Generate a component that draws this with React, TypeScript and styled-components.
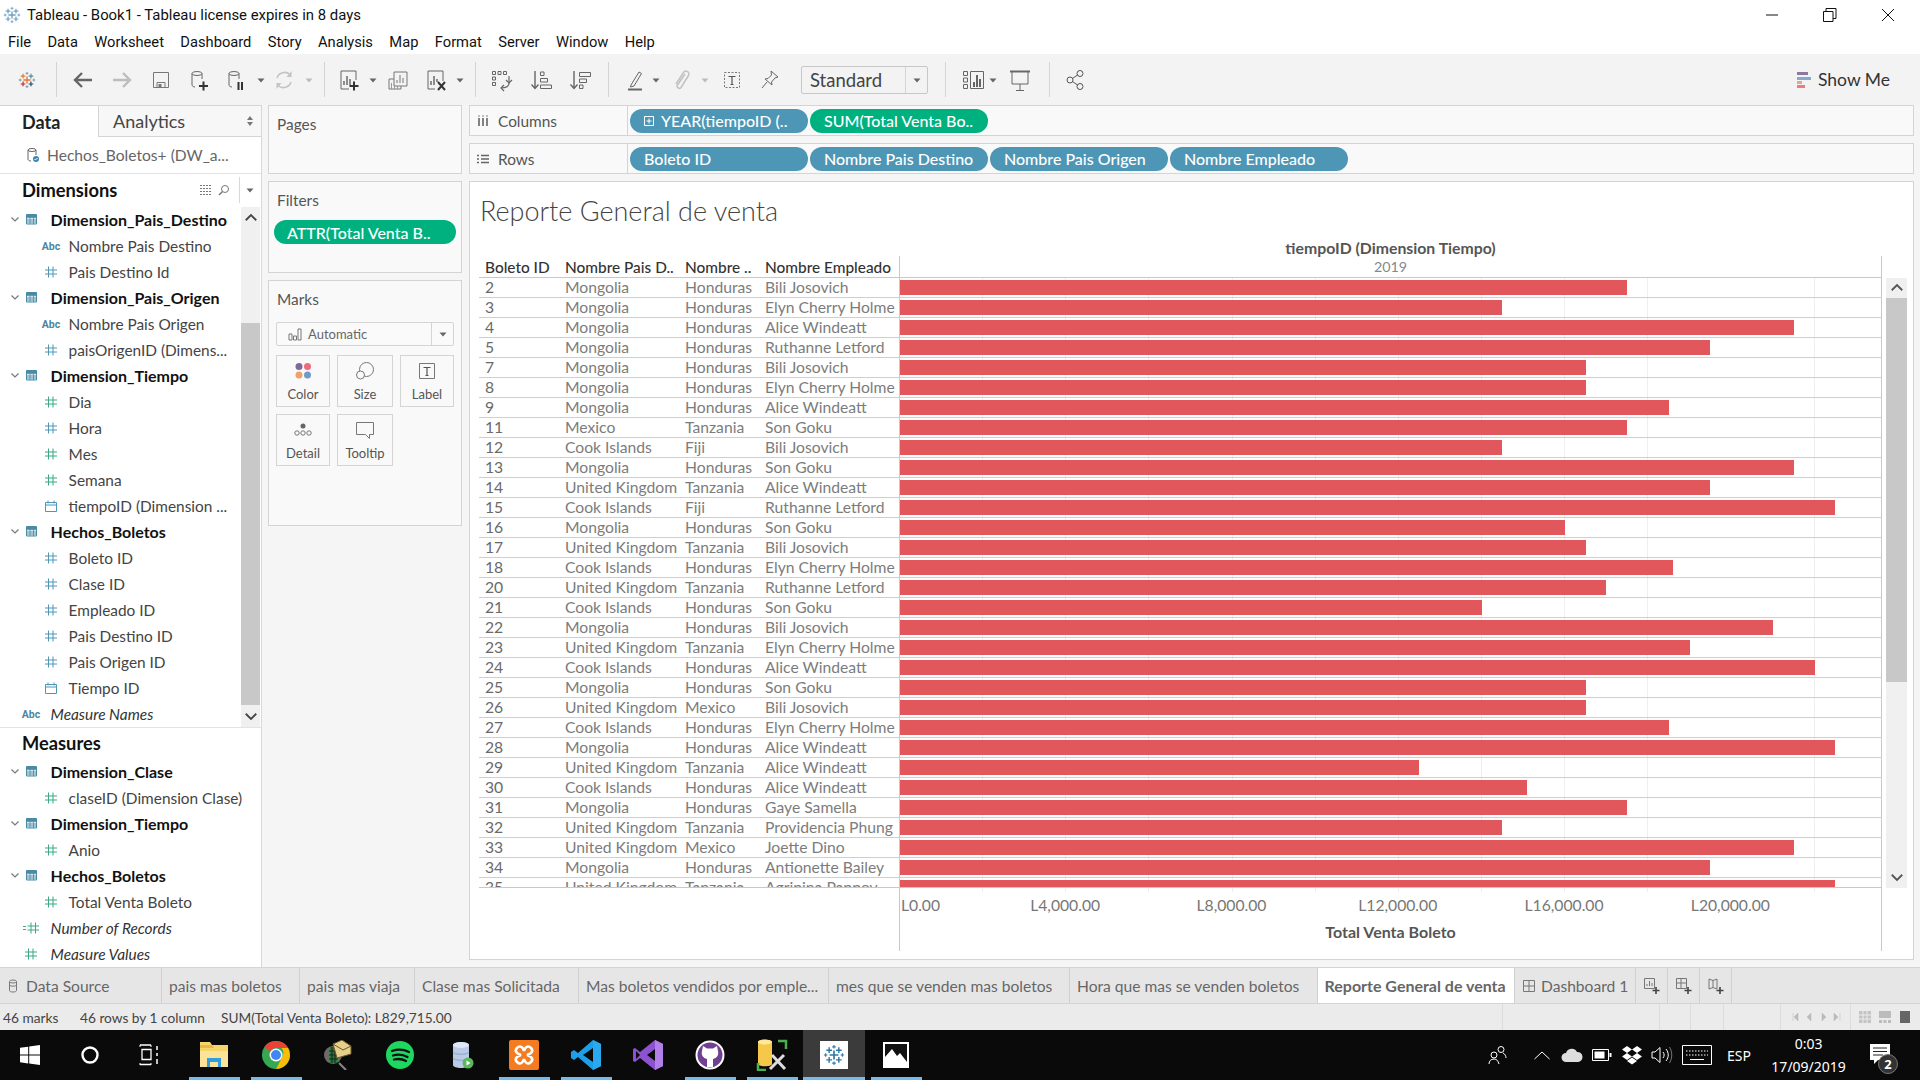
import React from "react";
import styled, { createGlobalStyle } from "styled-components";

const Global = createGlobalStyle`
  html, body { margin: 0; padding: 0; background: #fff; }
  * { box-sizing: border-box; }
`;

const book = `Lato, "Open Sans", sans-serif`;
const ui = `Roboto, "Noto Sans", sans-serif`;

const rows: [number, string, string, string, number][] = [
  [2, "Mongolia", "Honduras", "Bili Josovich", 1627],
  [3, "Mongolia", "Honduras", "Elyn Cherry Holme", 1502],
  [4, "Mongolia", "Honduras", "Alice Windeatt", 1794],
  [5, "Mongolia", "Honduras", "Ruthanne Letford", 1710],
  [7, "Mongolia", "Honduras", "Bili Josovich", 1586],
  [8, "Mongolia", "Honduras", "Elyn Cherry Holme", 1586],
  [9, "Mongolia", "Honduras", "Alice Windeatt", 1669],
  [11, "Mexico", "Tanzania", "Son Goku", 1627],
  [12, "Cook Islands", "Fiji", "Bili Josovich", 1502],
  [13, "Mongolia", "Honduras", "Son Goku", 1794],
  [14, "United Kingdom", "Tanzania", "Alice Windeatt", 1710],
  [15, "Cook Islands", "Fiji", "Ruthanne Letford", 1835],
  [16, "Mongolia", "Honduras", "Son Goku", 1565],
  [17, "United Kingdom", "Tanzania", "Bili Josovich", 1586],
  [18, "Cook Islands", "Honduras", "Elyn Cherry Holme", 1673],
  [20, "United Kingdom", "Tanzania", "Ruthanne Letford", 1606],
  [21, "Cook Islands", "Honduras", "Son Goku", 1482],
  [22, "Mongolia", "Honduras", "Bili Josovich", 1773],
  [23, "United Kingdom", "Tanzania", "Elyn Cherry Holme", 1690],
  [24, "Cook Islands", "Honduras", "Alice Windeatt", 1815],
  [25, "Mongolia", "Honduras", "Son Goku", 1586],
  [26, "United Kingdom", "Mexico", "Bili Josovich", 1586],
  [27, "Cook Islands", "Honduras", "Elyn Cherry Holme", 1669],
  [28, "Mongolia", "Honduras", "Alice Windeatt", 1835],
  [29, "United Kingdom", "Tanzania", "Alice Windeatt", 1419],
  [30, "Cook Islands", "Honduras", "Alice Windeatt", 1527],
  [31, "Mongolia", "Honduras", "Gaye Samella", 1627],
  [32, "United Kingdom", "Tanzania", "Providencia Phung", 1502],
  [33, "United Kingdom", "Mexico", "Joette Dino", 1794],
  [34, "Mongolia", "Honduras", "Antionette Bailey", 1710],
  [35, "United Kingdom", "Tanzania", "Agripina Pappov", 1835],
];

const BLUE = "#4e96b5";
const GREEN = "#3aa883";

/* ---------- icons ---------- */
const Ico = ({ s = 24, h, box, children }: { s?: number; h?: number; box?: string; children: React.ReactNode }) => (
  <svg width={s} height={h ?? s} viewBox={box ?? `0 0 ${s} ${h ?? s}`} fill="none">
    {children}
  </svg>
);

const cross = (x: number, y: number, r: number) => `M${x - r} ${y}H${x + r}M${x} ${y - r}V${y + r}`;

const TableauMark = ({ s = 20, mono }: { s?: number; mono?: string }) => (
  <Ico s={s} box="0 0 20 20">
    <path d={cross(10, 10, 4)} stroke={mono ?? "#e8762d"} strokeWidth="1.5" />
    <path d={cross(5.6, 5.6, 2.6)} stroke={mono ?? "#e8762d"} strokeWidth="1.3" />
    <path d={cross(14.4, 5.6, 2.6)} stroke={mono ?? "#5b879b"} strokeWidth="1.3" />
    <path d={cross(5.6, 14.4, 2.6)} stroke={mono ?? "#c72037"} strokeWidth="1.3" />
    <path d={cross(14.4, 14.4, 2.6)} stroke={mono ?? "#1f447e"} strokeWidth="1.3" />
    <path d={cross(10, 2.6, 1.6)} stroke={mono ?? "#7099a6"} strokeWidth="1" />
    <path d={cross(10, 17.4, 1.6)} stroke={mono ?? "#7099a6"} strokeWidth="1" />
    <path d={cross(2.4, 10, 1.6)} stroke={mono ?? "#7099a6"} strokeWidth="1" />
    <path d={cross(17.6, 10, 1.6)} stroke={mono ?? "#7099a6"} strokeWidth="1" />
  </Ico>
);

const Arrow = ({ flip, c }: { flip?: boolean; c: string }) => (
  <Ico s={24}>
    <path d={flip ? "M3 12h17M13 5l7 7-7 7" : "M21 12H4M11 5l-7 7 7 7"} stroke={c} strokeWidth="2.4" />
  </Ico>
);

const Save = () => (
  <Ico s={24}>
    <path d="M4.5 4.5h15v15h-15z" stroke="#777" />
    <path d="M8 19.5v-5h8v5" stroke="#777" />
    <path d="M9.5 16h3v3.5h-3z" fill="#777" />
  </Ico>
);

const Cyl = ({ c = "#666" }: { c?: string }) => (
  <>
    <ellipse cx="9" cy="5.5" rx="5" ry="2" stroke={c} />
    <path d="M4 5.5V17c0 1 1.5 2 3 2M14 5.5V11" stroke={c} />
  </>
);

const NewDS = () => (
  <Ico s={24}>
    <Cyl />
    <path d="M11 18h9M15.5 13.5v9" stroke="#333" strokeWidth="2" />
  </Ico>
);

const PauseDS = () => (
  <Ico s={24}>
    <Cyl />
    <path d="M13.5 14v8M17 14v8" stroke="#333" strokeWidth="2" />
  </Ico>
);

const Refresh = () => (
  <Ico s={24}>
    <path d="M5 10a8 8 0 0 1 13-3.5M19 14a8 8 0 0 1-13 3.5" stroke="#c4c4c4" strokeWidth="1.6" />
    <path d="M19.5 3v6h-5zM4.5 21v-6h5z" fill="#c4c4c4" />
  </Ico>
);

const Caret = ({ c = "#666" }: { c?: string }) => (
  <Ico s={10}>
    <path d="M1.5 3.5h7L5 7.5z" fill={c} />
  </Ico>
);

const NewSheet = () => (
  <Ico s={24}>
    <path d="M12 21H4V3h15v9" stroke="#666" />
    <path d="M7 17v-4M10 17V8M13 17v-6" stroke="#555" strokeWidth="1.3" />
    <path d="M12.5 18h9M17 13.5v9" stroke="#333" strokeWidth="2" />
  </Ico>
);

const Dup = () => (
  <Ico s={24}>
    <path d="M8 4h13v14H8z" stroke="#777" />
    <path d="M11 15v-3M14 15V7M17 15v-5" stroke="#777" />
    <path d="M3 11h5M3 11v10h12v-3" stroke="#777" />
    <path d="M5.5 21v-6M8.5 21v-3M11.5 21v-3" stroke="#999" />
  </Ico>
);

const Clear = () => (
  <Ico s={24}>
    <path d="M11 21H4V3h15v10" stroke="#666" />
    <path d="M7 17v-4M10 17V8M13 14v-3" stroke="#555" strokeWidth="1.3" />
    <path d="M14 14l7 8M21 14l-7 8" stroke="#333" strokeWidth="2" />
  </Ico>
);

const Swap = () => (
  <Ico s={24}>
    <path d="M3.5 3.5h3v3h-3zM9 3.5h3v3H9zM14.5 3.5h3v3h-3zM3.5 9h3v3h-3zM3.5 14.5h3v3h-3z" stroke="#666" />
    <path d="M20 8v7c0 3-3 5-8 5" stroke="#666" strokeWidth="1.2" />
    <path d="M17 12l3 3 3-3M15 17l-3 3 3 3" stroke="#666" strokeWidth="1.2" />
  </Ico>
);

const Sort = ({ desc }: { desc?: boolean }) => (
  <Ico s={24}>
    <path d="M6 3v17M2.5 16.5L6 20.5l3.5-4" stroke="#666" strokeWidth="1.4" />
    {desc ? (
      <path d="M11.5 4.5h11v4h-11zM11.5 11h7v3.5h-7zM11.5 17h3.5v3.5h-3.5z" stroke="#666" />
    ) : (
      <path d="M11.5 4h3.5v3.5h-3.5zM11.5 10.5h7V14h-7zM11.5 17h11v3.5h-11z" stroke="#666" />
    )}
  </Ico>
);

const Highlight = () => (
  <Ico s={24}>
    <path d="M8 17L16 4l2.5 1.5L11 18l-3.5 1z" stroke="#666" />
    <path d="M5 21.5h14" stroke="#666" strokeWidth="2" />
  </Ico>
);

const Clip = () => (
  <Ico s={24}>
    <path d="M16 6l-7.5 11c-1.5 2.5 2 4.5 3.5 2.5L19.5 7.5c2-3.5-3-6-5-3L7 16" stroke="#c2c2c2" strokeWidth="1.5" />
  </Ico>
);

const LabelT = ({ dashed }: { dashed?: boolean }) => (
  <Ico s={24}>
    <path d="M4.5 4.5h15v15h-15z" stroke="#777" strokeDasharray={dashed ? "2 1.5" : undefined} />
    <path d="M8.5 8.5h7M12 8.5v8M10.5 16.5h3" stroke="#555" strokeWidth="1.2" />
  </Ico>
);

const Pin = () => (
  <Ico s={24}>
    <path d="M13 3l7 6-3 1-3.5 4 .5 3-7-6 3-.5L13.5 7z" stroke="#666" />
    <path d="M9 14l-5 6" stroke="#666" />
  </Ico>
);

const FitIcon = () => (
  <Ico s={24}>
    <path d="M3.5 3.5h4v4h-4zM3.5 10h4v4h-4zM3.5 16.5h4v4h-4zM10.5 3.5h13v17h-13z" stroke="#666" />
    <path d="M14 19v-5M17 19V7M20 19v-8" stroke="#555" strokeWidth="1.8" />
  </Ico>
);

const Present = () => (
  <Ico s={24}>
    <path d="M2 3.5h20" stroke="#666" strokeWidth="2" />
    <path d="M4 4v12h16V4M12 16v6M8 22.5h8" stroke="#666" />
  </Ico>
);

const Share = () => (
  <Ico s={24}>
    <circle cx="6" cy="12" r="3" stroke="#555" />
    <circle cx="16" cy="5.5" r="3" stroke="#555" />
    <circle cx="16" cy="18.5" r="3" stroke="#555" />
    <path d="M8.5 10.5l5-3.5M8.5 13.5l5 3.5" stroke="#555" />
  </Ico>
);

const ShowMeBars = () => (
  <Ico s={14} h={16}>
    <path d="M0 0h11v3H0z" fill="#8a7a9c" />
    <path d="M0 5h14v3H0z" fill="#86a9cf" />
    <path d="M0 9h5v3H0z" fill="#eba57f" />
    <path d="M0 13h8v3H0z" fill="#ef7a85" />
  </Ico>
);

const TableGlyph = () => (
  <Ico s={12} h={11}>
    <path d="M.5.5h10v9.5H.5z" fill="#dbe9ef" stroke="#4a8aa6" />
    <path d="M.5 3.5h10M.5 6h10M.5 8h10M4 3.5V10M7.5 3.5V10" stroke="#4a8aa6" strokeWidth=".8" />
    <path d="M.5.5h10V3H.5z" fill="#4a8aa6" />
  </Ico>
);

const Hash = ({ c }: { c: string }) => (
  <Ico s={12}>
    <path d="M3.5.5v11M8 .5v11M0 4h12M0 8h12" stroke={c} />
  </Ico>
);

const DoubleHash = () => (
  <Ico s={16} h={12}>
    <path d="M8 .5v11M12.5 .5v11M4.5 4H16M4.5 8H16M0 4.5h3M0 7.5h3" stroke={GREEN} />
  </Ico>
);

const Cal = () => (
  <Ico s={12}>
    <path d="M.5 2.5h11v9H.5zM.5 5h11M3 .5v3M9 .5v3" stroke={BLUE} />
  </Ico>
);

const Chevron = ({ dir = "down", c = "#777", s = 8 }: { dir?: "down" | "up"; c?: string; s?: number }) => (
  <Ico s={s} box="0 0 8 8">
    <path d={dir === "down" ? "M.5 2.5L4 6l3.5-3.5" : "M.5 5.5L4 2l3.5 3.5"} stroke={c} strokeWidth="1.2" />
  </Ico>
);

const DataSourceIcon = () => (
  <Ico s={16}>
    <ellipse cx="6" cy="3" rx="4" ry="1.5" stroke="#666" />
    <path d="M2 3v9c0 1 1 2 3 2M10 3v5" stroke="#666" />
    <circle cx="10" cy="12" r="3" fill="#3d87b4" />
    <path d="M8.5 12l1 1 2-2" stroke="#fff" />
  </Ico>
);

const Mini = ({ kind }: { kind: "sheet" | "dash" | "story" }) => (
  <Ico s={18}>
    {kind === "sheet" && <path d="M1.5 1.5h10v10h-10zM4 9V7M6.5 9V4M9 9V6" stroke="#777" />}
    {kind === "dash" && <path d="M1.5 1.5h10v10h-10zM1.5 6h10M6 1.5v10" stroke="#777" />}
    {kind === "story" && <path d="M2 2l4 1.5L10 2v10l-4-1.5L2 12zM6 3.5v7" stroke="#777" />}
    <path d="M9.5 13.5h7M13 10v7" stroke="#444" strokeWidth="1.6" />
  </Ico>
);

/* ---------- taskbar icons ---------- */
const WinLogo = () => (
  <Ico s={20}>
    <path d="M0 2.8L8.2 1.7v7.9H0zM9.2 1.5L20 0v9.6H9.2zM0 10.5h8.2v7.9L0 17.2zM9.2 10.5H20V20L9.2 18.5z" fill="#fff" />
  </Ico>
);
const Cortana = () => (
  <Ico s={20}>
    <circle cx="10" cy="10" r="7.5" stroke="#fff" strokeWidth="2.4" />
  </Ico>
);
const TaskView = () => (
  <Ico s={22}>
    <path d="M1 1h11M1 20.5h11M3 5.5h9v10H3z" stroke="#fff" strokeWidth="1.3" />
    <path d="M18 2v4M18 9v3M18 15v5" stroke="#fff" strokeWidth="1.5" />
    <path d="M1 1v2M12 1v2M1 19v2M12 19v2" stroke="#fff" />
  </Ico>
);
const Explorer = () => (
  <Ico s={28}>
    <path d="M0 1h10l2 3h16v22H0z" fill="#f6d56b" />
    <path d="M0 4h12l2 3H0z" fill="#e8b93f" />
    <path d="M0 10h28v16H0z" fill="#fbe49a" />
    <path d="M7 17h14v9h-3v-5h-8v5H7z" fill="#2f9fe0" />
  </Ico>
);
const Chrome = () => (
  <Ico s={28}>
    <circle cx="14" cy="14" r="14" fill="#34a853" />
    <path d="M14 0a14 14 0 0 1 12.1 7H14a7 7 0 0 0-6.1 3.5L2.3 6A14 14 0 0 1 14 0z" fill="#ea4335" />
    <path d="M26.1 7A14 14 0 0 1 14 28l5.5-10.5L21 14a7 7 0 0 0-1.5-7z" fill="#fbbc05" />
    <circle cx="14" cy="14" r="6.5" fill="#fff" />
    <circle cx="14" cy="14" r="5" fill="#4285f4" />
  </Ico>
);
const MailSearch = () => (
  <Ico s={30}>
    <circle cx="10" cy="15" r="9" fill="#6b6b6b" />
    <path d="M7 7h7v16H7z" fill="#1a7d30" />
    <path d="M9 7v16M12 7v16M6 11h9M6 15h9M6 19h9" stroke="#222" />
    <path d="M10 4l9-4 9 6v8l-14 4z" fill="#e7cf8c" stroke="#6b5a25" />
    <path d="M10 4l10 6 8-4" stroke="#6b5a25" />
    <path d="M16 23l7 7" stroke="#888" strokeWidth="2" />
  </Ico>
);
const Spotify = () => (
  <Ico s={28}>
    <circle cx="14" cy="14" r="14" fill="#1ed760" />
    <path d="M6 10c6-2 12-1.5 17 1M7 14.5c5-1.5 10-1 14.5 1.5M8 18.5c4.5-1 8.5-.5 12 1.5" stroke="#111" strokeWidth="2.3" strokeLinecap="round" />
  </Ico>
);
const DSIcon = () => (
  <Ico s={28}>
    <path d="M5 4c0-4 16-4 16 0v20c0 4-16 4-16 0z" fill="#b9cbe6" />
    <ellipse cx="13" cy="4" rx="8" ry="3" fill="#dfe8f5" />
    <path d="M5 11c0 3 16 3 16 0M5 17c0 3 16 3 16 0" stroke="#8ea4c6" />
    <circle cx="20" cy="22" r="5.5" fill="#5cb85c" />
    <path d="M18.5 19.5l4 2.5-4 2.5z" fill="#fff" />
  </Ico>
);
const Xampp = () => (
  <Ico s={30}>
    <path d="M2 0h26a2 2 0 0 1 2 2v26a2 2 0 0 1-2 2H2a2 2 0 0 1-2-2V2a2 2 0 0 1 2-2z" fill="#f47b20" />
    <path d="M8 8c3-3 6-1 7 3 1-4 4-6 7-3s0 6-4 7c4 1 7 4 4 7s-6 1-7-3c-1 4-4 6-7 3s0-6 4-7c-4-1-7-4-4-7z" stroke="#fff" strokeWidth="2.6" />
  </Ico>
);
const VSCode = () => (
  <Ico s={30}>
    <path d="M22 0l8 4v22l-8 4L7 17l-4 3-3-2v-6l3-2 4 3z" fill="#1c9fe8" />
    <path d="M22 8L12 15l10 7z" fill="#0a0a0a" />
    <path d="M22 0l8 4v22l-8 4z" fill="#2aa9ee" />
  </Ico>
);
const VS = () => (
  <Ico s={30}>
    <path d="M22 0l8 4v22l-8 4L7 18l-5 4-2-1V9l2-1 5 4z" fill="#8d52d1" />
    <path d="M22 9l-8 6 8 6zM3 11v8l4-4z" fill="#0a0a0a" />
    <path d="M22 0l8 4v22l-8 4z" fill="#b27fe8" />
  </Ico>
);
const GitHub = () => (
  <Ico s={30}>
    <circle cx="15" cy="15" r="14.5" fill="#fff" />
    <circle cx="15" cy="15" r="12.5" fill="#6f3f91" />
    <path d="M8 6l4 2.5h6L22 6l1 5c1 4-1 7-5 8v8h-6v-8c-4-1-6-4-5-8z" fill="#fff" />
  </Ico>
);
const ToolIcon = () => (
  <Ico s={32}>
    <path d="M2 3c0-3 14-3 14 0v22c0 3-14 3-14 0z" fill="#f5c84a" />
    <ellipse cx="9" cy="3" rx="7" ry="2.5" fill="#ffe89a" />
    <path d="M22 2h8v8M2 24v7h8" stroke="#4caf50" strokeWidth="2.5" />
    <path d="M14 30l14-14M16 16l13 14" stroke="#ddd" strokeWidth="3" />
  </Ico>
);
const TableauTile = () => (
  <SmallTile>
    <TableauMark s={22} mono="#2f78a8" />
  </SmallTile>
);
const Photos = () => (
  <Ico s={26}>
    <path d="M0 0h26v26H0z" fill="#fff" />
    <path d="M2 2h22v22H2z" fill="#111" />
    <path d="M2 24V15l7-8 5 7 3-3 7 9v4z" fill="#fff" />
  </Ico>
);
const People = () => (
  <Ico s={20}>
    <circle cx="6" cy="10" r="3" stroke="#fff" />
    <circle cx="13" cy="4.5" r="3" stroke="#fff" />
    <path d="M1 19c0-3 2-5 5-5s4 2 5 5M15 8c2 1 3 3 3 5" stroke="#fff" />
  </Ico>
);
const Cloud = () => (
  <Ico s={22} h={16}>
    <path d="M5 15a4.5 4.5 0 0 1 0-9 6 6 0 0 1 11-1 5 5 0 0 1 1 10z" fill="#ddd" />
  </Ico>
);
const Battery = () => (
  <Ico s={20} h={12}>
    <path d="M.5.5h16v11H.5z" stroke="#fff" />
    <path d="M2.5 2.5h10v7h-10z" fill="#fff" />
    <path d="M17.5 4h2v4h-2z" fill="#fff" />
  </Ico>
);
const Dropbox = () => (
  <Ico s={20}>
    <path d="M5 1l5 3.5L5 8 0 4.5zM15 1l5 3.5L15 8l-5-3.5zM5 8l5 3.5L5 15l-5-3.5zM15 8l5 3.5L15 15l-5-3.5zM10 12.5l5 3.5-5 3.5L5 16z" fill="#fff" />
  </Ico>
);
const Volume = () => (
  <Ico s={22} h={18}>
    <path d="M1 6h3l5-4.5v15L4 12H1z" stroke="#fff" />
    <path d="M12 6c1.5 2 1.5 4 0 6M15 3c3 4 3 8 0 12" stroke="#fff" />
    <path d="M18.5 1c3 5 3 11 0 16" stroke="#777" />
  </Ico>
);
const Keyboard = () => (
  <Ico s={30} h={20}>
    <path d="M.5.5h29v19H.5z" stroke="#fff" />
    <path d="M4 6h22M4 10h22" stroke="#fff" strokeDasharray="1.5 1.5" />
    <path d="M8 14.5h14" stroke="#fff" />
  </Ico>
);
const NotifIcon = () => (
  <Ico s={20} h={22}>
    <path d="M0 0h20v16H8l-4 4v-4H0z" fill="#fff" />
    <path d="M3 4h14M3 7.5h14M3 11h10" stroke="#222" strokeWidth="1.2" />
  </Ico>
);

/* ---------- layout ---------- */
const Page = styled.div`
  width: 1920px;
  height: 1080px;
  display: flex;
  flex-direction: column;
  overflow: hidden;
  font-family: ${book};
  color: #333;
`;

const TitleBar = styled.div`
  height: 29px;
  display: flex;
  align-items: center;
  padding-left: 3px;
  font: 14.9px ${ui};
  color: #111;
  gap: 6px;
`;

const WindowBtns = styled.div`
  margin-left: auto;
  display: flex;
  padding-right: 3px;
`;

const WindowBtn = styled.div`
  width: 58px;
  height: 29px;
  display: flex;
  align-items: center;
  justify-content: center;
`;

const MenuBar = styled.div`
  height: 25px;
  display: flex;
  align-items: center;
  gap: 16.4px;
  padding-left: 8px;
  font: 14.7px ${ui};
  color: #111;
`;

const Toolbar = styled.div`
  height: 51px;
  display: flex;
  align-items: center;
  background: #f3f3f3;
`;

const Tool = styled.div<{ $ml: number; $w?: number }>`
  flex: none;
  width: ${(p) => p.$w ?? 28}px;
  margin-left: ${(p) => p.$ml}px;
  display: flex;
  align-items: center;
  justify-content: center;
`;

const ToolSep = styled.div<{ $ml: number }>`
  flex: none;
  width: 1px;
  height: 35px;
  margin-left: ${(p) => p.$ml}px;
  background: #d4d4d4;
`;

const StandardSelect = styled.div`
  flex: none;
  width: 127px;
  height: 28px;
  margin-left: 17px;
  border: 1px solid #c8c8c8;
  border-radius: 2px;
  display: flex;
  align-items: center;
  font-size: 18.5px;
  color: #444;
  padding-left: 8px;
`;

const SelectArrow = styled.span`
  margin-left: auto;
  width: 22px;
  height: 100%;
  border-left: 1px solid #d4d4d4;
  display: flex;
  align-items: center;
  justify-content: center;
`;

const ShowMe = styled.div`
  margin-left: auto;
  padding-right: 30px;
  display: flex;
  align-items: center;
  gap: 7px;
  font-size: 17.5px;
  color: #333;
`;

const Workspace = styled.div`
  height: 862px;
  display: flex;
  background: #f5f5f5;
`;

const Sidebar = styled.aside`
  flex: none;
  width: 262px;
  background: #fff;
  border-right: 1px solid #d8d8d8;
  border-top: 1px solid #d4d4d4;
  display: flex;
  flex-direction: column;
`;

const SideTabs = styled.div`
  height: 31px;
  display: flex;
  flex: none;
`;

const DataTab = styled.div`
  width: 98px;
  padding-left: 22px;
  font-size: 18px;
  font-weight: 700;
  color: #222;
  display: flex;
  align-items: center;
`;

const AnalyticsTab = styled.div`
  flex: 1;
  display: flex;
  align-items: center;
  padding: 0 7px 0 14px;
  font-size: 18px;
  color: #444;
  background: #f7f7f7;
  border-left: 1px solid #d4d4d4;
  border-bottom: 1px solid #d4d4d4;
  justify-content: space-between;
`;

const SourceRow = styled.div`
  height: 37px;
  flex: none;
  display: flex;
  align-items: center;
  gap: 5px;
  padding-left: 26px;
  font-size: 15.6px;
  color: #666;
  border-bottom: 1px solid #e3e3e3;
`;

const SideHeader = styled.div<{ $h: number }>`
  height: ${(p) => p.$h}px;
  flex: none;
  display: flex;
  align-items: center;
  padding: 0 0 2px 22px;
  font-size: 18.3px;
  font-weight: 700;
  color: #111;
`;

const HeaderTools = styled.div`
  margin-left: auto;
  display: flex;
  align-items: center;
  gap: 5.5px;
  padding-right: 6px;
`;

const HeaderSep = styled.div`
  width: 1px;
  height: 26px;
  margin-left: 3px;
  background: #d8d8d8;
`;

const DimArea = styled.div`
  height: 521px;
  flex: none;
  display: flex;
  border-bottom: 1px solid #e3e3e3;
`;

const TreeList = styled.div`
  flex: 1;
  min-width: 0;
`;

const SideScroll = styled.div`
  flex: none;
  width: 19px;
  margin-right: 1px;
  display: flex;
  flex-direction: column;
  background: #f0f0f0;
`;

const ScrollEnd = styled.div<{ $h: number }>`
  height: ${(p) => p.$h}px;
  flex: none;
  display: flex;
  align-items: center;
  justify-content: center;
`;

const ScrollThumb = styled.div<{ $h: number }>`
  height: ${(p) => p.$h}px;
  flex: none;
  background: #c8c8c8;
`;

const ScrollFill = styled.div`
  flex: 1;
`;

const TreeRow = styled.div`
  height: 26px;
  display: flex;
  align-items: center;
  white-space: nowrap;
  font-size: 15.4px;
`;

const SectionRow = styled(TreeRow)`
  padding: 0 0 2px 10px;
  font-size: 16px;
  font-weight: 700;
  color: #111;
`;

const FieldRow = styled(TreeRow)`
  padding-left: 42px;
  color: #444;
`;

const SpecialRow = styled(TreeRow)`
  padding-left: 22px;
  color: #333;
  font-style: italic;
`;

const IconSlot = styled.span<{ $w: number; $ml?: number; $mr?: number }>`
  flex: none;
  width: ${(p) => p.$w}px;
  margin-left: ${(p) => p.$ml ?? 0}px;
  margin-right: ${(p) => p.$mr ?? 0}px;
  display: flex;
  align-items: center;
  justify-content: center;
`;

const AbcTag = styled.span`
  font: 700 10.5px Roboto, sans-serif;
  font-style: normal;
  color: #4a87a3;
`;

const CardsCol = styled.div`
  flex: none;
  width: 194px;
  margin-left: 6px;
  display: flex;
  flex-direction: column;
  gap: 7px;
`;

const Card = styled.section<{ $h: number }>`
  height: ${(p) => p.$h}px;
  flex: none;
  background: #f9f9f9;
  border: 1px solid #d4d4d4;
  padding: 0 7px;
`;

const CardTitle = styled.div`
  height: 35px;
  display: flex;
  align-items: center;
  padding-left: 1px;
  font-size: 15.4px;
  color: #555;
`;

const FilterPill = styled.div`
  height: 24px;
  border-radius: 12px;
  background: #00b180;
  color: #fff;
  margin: 3px -2px 0 -2px;
  padding-left: 13px;
  display: flex;
  align-items: center;
  font-size: 16px;
  font-weight: 500;
`;

const MarkType = styled.div`
  height: 24px;
  margin: 6px 0 9px 0;
  width: 178px;
  background: #fafafa;
  border: 1px solid #d4d4d4;
  border-radius: 2px;
  display: flex;
  align-items: center;
  padding-left: 11px;
  gap: 6px;
  font-size: 13px;
  color: #666;
`;

const MarkGrid = styled.div`
  display: grid;
  grid-template-columns: 54px 56px 54px;
  grid-auto-rows: 52px;
  gap: 7px;
`;

const MarkBtn = styled.div`
  border: 1px solid #d4d4d4;
  display: flex;
  flex-direction: column;
  align-items: center;
  font-size: 13px;
  color: #555;
  padding-top: 3px;
  gap: 3px;
`;

const MarkIcon = styled.div`
  height: 24px;
  display: flex;
  align-items: center;
`;

const MainCol = styled.div`
  flex: 1;
  min-width: 0;
  margin-left: 7px;
  margin-right: 6px;
  display: flex;
  flex-direction: column;
  gap: 7px;
`;

const Shelf = styled.div`
  height: 31px;
  flex: none;
  display: flex;
  align-items: center;
  background: #f9f9f9;
  border: 1px solid #d4d4d4;
`;

const ShelfLabel = styled.div`
  width: 158px;
  height: 100%;
  flex: none;
  display: flex;
  align-items: center;
  gap: 9px;
  padding-left: 7px;
  font-size: 15.4px;
  color: #555;
  border-right: 1px solid #d4d4d4;
  margin-right: 2px;
`;

const Pill = styled.div<{ $green?: boolean }>`
  width: 178px;
  height: 24px;
  flex: none;
  margin-right: 2px;
  border-radius: 12px;
  background: ${(p) => (p.$green ? "#00b180" : "#4e96b5")};
  color: #fff;
  display: flex;
  align-items: center;
  gap: 7px;
  padding-left: 14px;
  font-size: 16px;
  font-weight: 500;
  white-space: nowrap;
`;

const Viz = styled.section`
  height: 779px;
  flex: none;
  background: #fff;
  border: 1px solid #d4d4d4;
  padding-left: 9px;
  display: flex;
  flex-direction: column;
`;

const VizTitle = styled.h1`
  margin: 0;
  height: 57px;
  padding-left: 1px;
  display: flex;
  align-items: center;
  font-size: 27px;
  font-weight: 300;
  color: #444;
  flex: none;
`;

const ChartCaption = styled.div`
  height: 17px;
  margin-left: 420px;
  width: 983px;
  text-align: center;
  font-size: 15.8px;
  font-weight: 700;
  color: #555;
  line-height: 17px;
  flex: none;
`;

const HeadRow = styled.div`
  height: 22px;
  width: 1403px;
  display: flex;
  flex: none;
  border-bottom: 1px solid #c8c8c8;
  padding-left: 6px;
  font-size: 15.4px;
  font-weight: 500;
  color: #333;
  align-items: center;
`;

const YearCell = styled.div`
  width: 983px;
  height: 100%;
  border-left: 1px solid #c8c8c8;
  border-right: 1px solid #c8c8c8;
  display: flex;
  align-items: center;
  justify-content: center;
  font-size: 14.3px;
  font-weight: 400;
  color: #888;
`;

const Cell = styled.div<{ $w: number; $c?: string }>`
  flex: none;
  width: ${(p) => p.$w}px;
  color: ${(p) => p.$c ?? "inherit"};
  white-space: nowrap;
`;

const BodyCell = styled(Cell)`
  margin-bottom: 2px;
`;

const TableBody = styled.div`
  height: 610px;
  display: flex;
  flex: none;
`;

const RowsClip = styled.div`
  width: 1403px;
  height: 610px;
  overflow: hidden;
  border-bottom: 1px solid #c8c8c8;
  flex: none;
`;

const DataRow = styled.div`
  height: 20px;
  display: flex;
  align-items: center;
  border-bottom: 1px solid #cfcfcf;
  padding-left: 6px;
  font-size: 15.7px;
  color: #7c7c7c;
`;

const BarCell = styled.div`
  width: 983px;
  height: 19px;
  flex: none;
  padding-top: 2px;
  border-right: 1px solid #c8c8c8;
  border-left: 1px solid #c8c8c8;
  background: repeating-linear-gradient(90deg, transparent 0 82.15px, #efefef 82.15px 83.15px);
`;

const Bar = styled.div`
  height: 15px;
  background: #e2575c;
`;

const TableScroll = styled.div`
  width: 21px;
  margin-left: 4px;
  display: flex;
  flex-direction: column;
  background: #f0f0f0;
  flex: none;
`;

const AxisArea = styled.div`
  margin-left: 420px;
  width: 983px;
  height: 63px;
  flex: none;
  display: flex;
  flex-direction: column;
  border-left: 1px solid #c8c8c8;
  border-right: 1px solid #c8c8c8;
  background-image: repeating-linear-gradient(90deg, transparent 0 82.15px, #efefef 82.15px 83.15px);
  background-size: 100% 4px;
  background-repeat: no-repeat;
`;

const AxisTicks = styled.div`
  display: flex;
  height: 34px;
  align-items: center;
  font-size: 15.7px;
  color: #777;
`;

const Tick = styled.div<{ $first?: boolean }>`
  flex: none;
  width: ${(p) => (p.$first ? 82 : 166.3)}px;
  text-align: ${(p) => (p.$first ? "left" : "center")};
  padding-left: ${(p) => (p.$first ? 1 : 0)}px;
  white-space: nowrap;
`;

const AxisTitle = styled.div`
  text-align: center;
  font-size: 16px;
  font-weight: 700;
  color: #555;
`;

const SheetTabs = styled.div`
  height: 37px;
  flex: none;
  display: flex;
  background: #e6e6e6;
  border-top: 1px solid #d4d4d4;
  border-bottom: 1px solid #d4d4d4;
  font-size: 15.6px;
  color: #666;
`;

const SheetTab = styled.div<{ $w: number; $active?: boolean }>`
  flex: none;
  width: ${(p) => p.$w}px;
  display: flex;
  align-items: center;
  gap: 5px;
  white-space: nowrap;
  padding-left: 7px;
  border-right: 1px solid #d0d0d0;
  background: ${(p) => (p.$active ? "#fff" : "transparent")};
  font-weight: ${(p) => (p.$active ? 700 : 400)};
  font-size: ${(p) => (p.$active ? "16px" : "inherit")};
`;

const AddTab = styled.div`
  flex: none;
  width: 32px;
  display: flex;
  align-items: center;
  justify-content: center;
  border-right: 1px solid #d0d0d0;
`;

const StatusBar = styled.div`
  height: 26px;
  flex: none;
  display: flex;
  align-items: center;
  background: #ebebeb;
  font-size: 13.7px;
  color: #444;
`;

const StatusText = styled.span<{ $w: number; $pl?: number }>`
  flex: none;
  width: ${(p) => p.$w}px;
  padding-left: ${(p) => p.$pl ?? 0}px;
  white-space: nowrap;
`;

const StatusCell = styled.div<{ $w: number }>`
  flex: none;
  width: ${(p) => p.$w}px;
  height: 100%;
  border-left: 1px solid #dcdcdc;
  display: flex;
  align-items: center;
  justify-content: space-around;
  padding: 0 4px;
`;

const Taskbar = styled.footer`
  height: 50px;
  flex: none;
  background: #0a0a0a;
  display: flex;
  align-items: stretch;
  color: #fff;
  font-family: "Noto Sans", sans-serif;
`;

const TaskSlot = styled.div<{ $w: number; $ml?: number; $open?: boolean; $active?: boolean }>`
  position: relative;
  flex: none;
  width: ${(p) => p.$w}px;
  margin-left: ${(p) => p.$ml ?? 0}px;
  display: flex;
  align-items: center;
  justify-content: center;
  background: ${(p) => (p.$active ? "#3b3b3b" : "transparent")};

  &::after {
    content: "";
    display: ${(p) => (p.$open ? "block" : "none")};
    position: absolute;
    bottom: 0;
    left: ${(p) => (p.$active ? 0 : 5.5)}px;
    right: ${(p) => (p.$active ? 0 : 5.5)}px;
    height: 3px;
    background: #76b9ed;
  }
`;

const SmallTile = styled.div`
  width: 28px;
  height: 28px;
  background: #fff;
  display: flex;
  align-items: center;
  justify-content: center;
`;

const TrayArea = styled.div`
  margin-left: auto;
  padding-right: 10px;
  display: flex;
  align-items: stretch;
`;

const TrayText = styled.div<{ $w: number; $ml?: number }>`
  flex: none;
  width: ${(p) => p.$w}px;
  margin-left: ${(p) => p.$ml ?? 0}px;
  display: flex;
  flex-direction: column;
  align-items: center;
  justify-content: center;
  font-size: 14px;
  line-height: 23px;
  white-space: nowrap;
`;

const Badge = styled.span`
  position: absolute;
  right: 12px;
  bottom: 6px;
  width: 20px;
  height: 20px;
  border-radius: 50%;
  background: #333;
  border: 1px solid #777;
  color: #fff;
  font-size: 13px;
  font-weight: 700;
  display: flex;
  align-items: center;
  justify-content: center;
`;

/* ---------- data-panel content ---------- */
type Item =
  | { t: "s"; l: string }
  | { t: "f"; l: string; i: "abc" | "blue" | "green" | "cal" }
  | { t: "x"; l: string; i: "abc" | "dbl" | "green" };

const dims: Item[] = [
  { t: "s", l: "Dimension_Pais_Destino" },
  { t: "f", l: "Nombre Pais Destino", i: "abc" },
  { t: "f", l: "Pais Destino Id", i: "blue" },
  { t: "s", l: "Dimension_Pais_Origen" },
  { t: "f", l: "Nombre Pais Origen", i: "abc" },
  { t: "f", l: "paisOrigenID (Dimens...", i: "blue" },
  { t: "s", l: "Dimension_Tiempo" },
  { t: "f", l: "Dia", i: "green" },
  { t: "f", l: "Hora", i: "blue" },
  { t: "f", l: "Mes", i: "green" },
  { t: "f", l: "Semana", i: "green" },
  { t: "f", l: "tiempoID (Dimension ...", i: "cal" },
  { t: "s", l: "Hechos_Boletos" },
  { t: "f", l: "Boleto ID", i: "blue" },
  { t: "f", l: "Clase ID", i: "blue" },
  { t: "f", l: "Empleado ID", i: "blue" },
  { t: "f", l: "Pais Destino ID", i: "blue" },
  { t: "f", l: "Pais Origen ID", i: "blue" },
  { t: "f", l: "Tiempo ID", i: "cal" },
  { t: "x", l: "Measure Names", i: "abc" },
];

const measures: Item[] = [
  { t: "s", l: "Dimension_Clase" },
  { t: "f", l: "claseID (Dimension Clase)", i: "green" },
  { t: "s", l: "Dimension_Tiempo" },
  { t: "f", l: "Anio", i: "green" },
  { t: "s", l: "Hechos_Boletos" },
  { t: "f", l: "Total Venta Boleto", i: "green" },
  { t: "x", l: "Number of Records", i: "dbl" },
  { t: "x", l: "Measure Values", i: "green" },
];

const fieldIcon = (i: string) => {
  if (i === "abc") return <AbcTag>Abc</AbcTag>;
  if (i === "blue") return <Hash c={BLUE} />;
  if (i === "green") return <Hash c={GREEN} />;
  if (i === "cal") return <Cal />;
  return <DoubleHash />;
};

const Tree = ({ items }: { items: Item[] }) => (
  <>
    {items.map((it, n) => {
      if (it.t === "s")
        return (
          <SectionRow key={n}>
            <IconSlot $w={10}>
              <Chevron />
            </IconSlot>
            <IconSlot $w={12} $ml={6} $mr={12.6}>
              <TableGlyph />
            </IconSlot>
            {it.l}
          </SectionRow>
        );
      if (it.t === "f")
        return (
          <FieldRow key={n}>
            <IconSlot $w={18} $mr={8.6}>
              {fieldIcon(it.i)}
            </IconSlot>
            {it.l}
          </FieldRow>
        );
      return (
        <SpecialRow key={n}>
          <IconSlot $w={18} $mr={10.6}>
            {fieldIcon(it.i)}
          </IconSlot>
          {it.l}
        </SpecialRow>
      );
    })}
  </>
);

const tabs: [string, number][] = [
  ["pais mas boletos", 138],
  ["pais mas viaja", 115],
  ["Clase mas Solicitada", 164],
  ["Mas boletos vendidos por emple...", 250],
  ["mes que se venden mas boletos", 241],
  ["Hora que mas se venden boletos", 247.5],
];

const taskApps: [React.ReactNode, boolean, boolean][] = [
  [<Explorer />, true, false],
  [<Chrome />, true, false],
  [<MailSearch />, false, false],
  [<Spotify />, false, false],
  [<DSIcon />, false, false],
  [<Xampp />, true, false],
  [<VSCode />, true, false],
  [<VS />, false, false],
  [<GitHub />, true, false],
  [<ToolIcon />, true, false],
  [<TableauTile />, true, true],
  [<Photos />, true, false],
];

export default function App() {
  return (
    <Page>
      <Global />
      <TitleBar>
        <TableauMark s={18} mono="#6f9fc0" />
        Tableau - Book1 - Tableau license expires in 8 days
        <WindowBtns>
          <WindowBtn>
            <Ico s={14}>
              <path d="M1 7h12" stroke="#111" />
            </Ico>
          </WindowBtn>
          <WindowBtn>
            <Ico s={14}>
              <path d="M.5 3.5H10v10H.5zM3 3.5V.5h10v10h-3" stroke="#111" />
            </Ico>
          </WindowBtn>
          <WindowBtn>
            <Ico s={14}>
              <path d="M1 1l12 12M13 1L1 13" stroke="#111" />
            </Ico>
          </WindowBtn>
        </WindowBtns>
      </TitleBar>
      <MenuBar>
        {["File", "Data", "Worksheet", "Dashboard", "Story", "Analysis", "Map", "Format", "Server", "Window", "Help"].map((m) => (
          <span key={m}>{m}</span>
        ))}
      </MenuBar>

      <Toolbar>
        <Tool $ml={13}><TableauMark s={18} /></Tool>
        <ToolSep $ml={15} />
        <Tool $ml={12}><Arrow c="#666" /></Tool>
        <Tool $ml={11}><Arrow flip c="#bdbdbd" /></Tool>
        <Tool $ml={11}><Save /></Tool>
        <Tool $ml={11}><NewDS /></Tool>
        <Tool $ml={9}><PauseDS /></Tool>
        <Tool $ml={5} $w={10}><Caret /></Tool>
        <Tool $ml={4}><Refresh /></Tool>
        <Tool $ml={6} $w={10}><Caret c="#bbb" /></Tool>
        <ToolSep $ml={10} />
        <Tool $ml={10}><NewSheet /></Tool>
        <Tool $ml={5} $w={10}><Caret /></Tool>
        <Tool $ml={6}><Dup /></Tool>
        <Tool $ml={10}><Clear /></Tool>
        <Tool $ml={5} $w={10}><Caret /></Tool>
        <ToolSep $ml={10} />
        <Tool $ml={11}><Swap /></Tool>
        <Tool $ml={12}><Sort /></Tool>
        <Tool $ml={11}><Sort desc /></Tool>
        <ToolSep $ml={14} />
        <Tool $ml={12}><Highlight /></Tool>
        <Tool $ml={2} $w={10}><Caret /></Tool>
        <Tool $ml={6}><Clip /></Tool>
        <Tool $ml={5} $w={10}><Caret c="#bbb" /></Tool>
        <Tool $ml={8}><LabelT dashed /></Tool>
        <Tool $ml={10}><Pin /></Tool>
        <StandardSelect>
          Standard
          <SelectArrow><Caret /></SelectArrow>
        </StandardSelect>
        <ToolSep $ml={17} />
        <Tool $ml={12}><FitIcon /></Tool>
        <Tool $ml={2} $w={10}><Caret /></Tool>
        <Tool $ml={8}><Present /></Tool>
        <ToolSep $ml={15} />
        <Tool $ml={12}><Share /></Tool>
        <ShowMe><ShowMeBars />Show Me</ShowMe>
      </Toolbar>

      <Workspace>
        <Sidebar>
          <SideTabs>
            <DataTab>Data</DataTab>
            <AnalyticsTab>
              Analytics
              <Ico s={8} h={12}>
                <path d="M4 1l3 4H1zM4 11l3-4H1z" fill="#777" />
              </Ico>
            </AnalyticsTab>
          </SideTabs>
          <SourceRow>
            <DataSourceIcon />
            Hechos_Boletos+ (DW_a...
          </SourceRow>
          <SideHeader $h={33}>
            Dimensions
            <HeaderTools>
              <Ico s={14} h={12}>
                <path d="M1 1.5h12M1 4.5h12M1 7.5h12M1 10.5h12" stroke="#777" strokeDasharray="2 1" />
              </Ico>
              <Ico s={12}>
                <circle cx="7" cy="5" r="3.5" stroke="#777" />
                <path d="M4.5 7.5L1 11" stroke="#777" strokeWidth="1.4" />
              </Ico>
              <HeaderSep />
              <Caret />
            </HeaderTools>
          </SideHeader>
          <DimArea>
            <TreeList>
              <Tree items={dims} />
            </TreeList>
            <SideScroll>
              <ScrollEnd $h={22}><Chevron dir="up" c="#444" s={12} /></ScrollEnd>
              <ScrollFill />
              <ScrollThumb $h={382} />
              <ScrollEnd $h={22}><Chevron c="#444" s={12} /></ScrollEnd>
            </SideScroll>
          </DimArea>
          <SideHeader $h={31}>Measures</SideHeader>
          <TreeList>
            <Tree items={measures} />
          </TreeList>
        </Sidebar>

        <CardsCol>
          <Card $h={69}>
            <CardTitle>Pages</CardTitle>
          </Card>
          <Card $h={92}>
            <CardTitle>Filters</CardTitle>
            <FilterPill>ATTR(Total Venta B..</FilterPill>
          </Card>
          <Card $h={246}>
            <CardTitle>Marks</CardTitle>
            <MarkType>
              <Ico s={14}>
                <path d="M1 7h3v6H1zM5.5 9h3v4h-3zM10 2h3v11h-3z" stroke="#777" />
              </Ico>
              Automatic
              <SelectArrow><Caret /></SelectArrow>
            </MarkType>
            <MarkGrid>
              <MarkBtn>
                <MarkIcon>
                  <Ico s={20}>
                    <circle cx="6" cy="5.5" r="3.5" fill="#7d6a96" />
                    <circle cx="14.5" cy="5.5" r="3.5" fill="#ef6a7b" />
                    <circle cx="6" cy="14" r="3.5" fill="#f0a06a" />
                    <circle cx="14.5" cy="14" r="3.5" fill="#6f9bc8" />
                  </Ico>
                </MarkIcon>
                Color
              </MarkBtn>
              <MarkBtn>
                <MarkIcon>
                  <Ico s={20}>
                    <circle cx="11.5" cy="8.5" r="7" stroke="#777" />
                    <circle cx="5.5" cy="14" r="4" fill="#f9f9f9" stroke="#777" />
                  </Ico>
                </MarkIcon>
                Size
              </MarkBtn>
              <MarkBtn>
                <MarkIcon><LabelT /></MarkIcon>
                Label
              </MarkBtn>
              <MarkBtn>
                <MarkIcon>
                  <Ico s={20} box="0 0 20 20">
                    <circle cx="10" cy="6" r="2.5" fill="#666" />
                    <circle cx="4" cy="13" r="2.2" stroke="#777" />
                    <circle cx="10" cy="13" r="2.2" stroke="#777" />
                    <circle cx="16" cy="13" r="2.2" stroke="#777" />
                  </Ico>
                </MarkIcon>
                Detail
              </MarkBtn>
              <MarkBtn>
                <MarkIcon>
                  <Ico s={20}>
                    <path d="M1.5 2.5h17v12h-4v4l-4-4h-9z" stroke="#777" />
                  </Ico>
                </MarkIcon>
                Tooltip
              </MarkBtn>
            </MarkGrid>
          </Card>
        </CardsCol>

        <MainCol>
          <Shelf>
            <ShelfLabel>
              <Ico s={12}>
                <path d="M2 3v8M6 3v8M10 3v8" stroke="#666" strokeWidth="1.6" />
                <path d="M2 .5v1M6 .5v1M10 .5v1" stroke="#666" strokeWidth="1.6" />
              </Ico>
              Columns
            </ShelfLabel>
            <Pill>
              <Ico s={10}>
                <path d="M.5.5h9v9h-9zM2.5 5h5M5 2.5v5" stroke="#fff" />
              </Ico>
              YEAR(tiempoID (..
            </Pill>
            <Pill $green>SUM(Total Venta Bo..</Pill>
          </Shelf>
          <Shelf>
            <ShelfLabel>
              <Ico s={12}>
                <path d="M0 2.5h2M4 2.5h8M0 6h2M4 6h8M0 9.5h2M4 9.5h8" stroke="#666" strokeWidth="1.4" />
              </Ico>
              Rows
            </ShelfLabel>
            <Pill>Boleto ID</Pill>
            <Pill>Nombre Pais Destino</Pill>
            <Pill>Nombre Pais Origen</Pill>
            <Pill>Nombre Empleado</Pill>
          </Shelf>
          <Viz>
            <VizTitle>Reporte General de venta</VizTitle>
            <ChartCaption>tiempoID (Dimension Tiempo)</ChartCaption>
            <HeadRow>
              <Cell $w={80}>Boleto ID</Cell>
              <Cell $w={120}>Nombre Pais D..</Cell>
              <Cell $w={80}>Nombre ..</Cell>
              <Cell $w={134}>Nombre Empleado</Cell>
              <YearCell>2019</YearCell>
            </HeadRow>
            <TableBody>
              <RowsClip>
                {rows.map(([id, dest, orig, emp, end]) => (
                  <DataRow key={id}>
                    <BodyCell $w={80} $c="#6a6a6a">{id}</BodyCell>
                    <BodyCell $w={120}>{dest}</BodyCell>
                    <BodyCell $w={80}>{orig}</BodyCell>
                    <BodyCell $w={134}>{emp}</BodyCell>
                    <BarCell>
                      <Bar style={{ width: end - 900 }} />
                    </BarCell>
                  </DataRow>
                ))}
              </RowsClip>
              <TableScroll>
                <ScrollEnd $h={20}><Chevron dir="up" c="#555" s={12} /></ScrollEnd>
                <ScrollThumb $h={384} />
                <ScrollFill />
                <ScrollEnd $h={22}><Chevron c="#555" s={12} /></ScrollEnd>
              </TableScroll>
            </TableBody>
            <AxisArea>
              <AxisTicks>
                <Tick $first>L0.00</Tick>
                <Tick>L4,000.00</Tick>
                <Tick>L8,000.00</Tick>
                <Tick>L12,000.00</Tick>
                <Tick>L16,000.00</Tick>
                <Tick>L20,000.00</Tick>
              </AxisTicks>
              <AxisTitle>Total Venta Boleto</AxisTitle>
            </AxisArea>
          </Viz>
        </MainCol>
      </Workspace>

      <SheetTabs>
        <SheetTab $w={162}>
          <Ico s={14}>
            <ellipse cx="6" cy="2.5" rx="3.5" ry="1.5" stroke="#777" />
            <path d="M2.5 2.5v9c0 2 7 2 7 0v-9M2.5 6c0 1.5 7 1.5 7 0" stroke="#777" />
          </Ico>
          Data Source
        </SheetTab>
        {tabs.map(([t, w]) => (
          <SheetTab key={t} $w={w}>{t}</SheetTab>
        ))}
        <SheetTab $w={197.5} $active>Reporte General de venta</SheetTab>
        <SheetTab $w={121}>
          <Ico s={14}>
            <path d="M1.5 1.5h11v11h-11zM1.5 7h11M7 1.5v11" stroke="#777" />
          </Ico>
          Dashboard 1
        </SheetTab>
        <AddTab><Mini kind="sheet" /></AddTab>
        <AddTab><Mini kind="dash" /></AddTab>
        <AddTab><Mini kind="story" /></AddTab>
      </SheetTabs>

      <StatusBar>
        <StatusText $w={80} $pl={3}>46 marks</StatusText>
        <StatusText $w={141}>46 rows by 1 column</StatusText>
        <StatusText $w={1280.5}>SUM(Total Venta Boleto): L829,715.00</StatusText>
        <StatusCell $w={157.5} />
        <StatusCell $w={31} />
        <StatusCell $w={33} />
        <StatusCell $w={57} />
        <StatusCell $w={70}>
          {["M6 2v8M11 2L7 6l4 4z", "M9 2L5 6l4 4z", "M5 2l4 4-4 4z", "M2 2l4 4-4 4zM8 2v8"].map((d) => (
            <Ico key={d} s={12}><path d={d} fill="#bbb" stroke="#bbb" strokeWidth=".5" /></Ico>
          ))}
        </StatusCell>
        <StatusCell $w={69}>
          <Ico s={12}>
            <path d="M0 0h12v12H0z" fill="#c4c4c4" />
            <path d="M4 0v12M8 0v12M0 4h12M0 8h12" stroke="#ebebeb" />
          </Ico>
          <Ico s={12}>
            <path d="M0 0h12v7H0zM0 9h3v3H0zM4.5 9h3v3h-3zM9 9h3v3H9z" fill="#bbb" />
          </Ico>
          <Ico s={12}>
            <path d="M1 0h10v12H1z" fill="#666" />
          </Ico>
        </StatusCell>
      </StatusBar>

      <Taskbar>
        <TaskSlot $w={60}><WinLogo /></TaskSlot>
        <TaskSlot $w={60}><Cortana /></TaskSlot>
        <TaskSlot $w={60}><TaskView /></TaskSlot>
        <TaskSlot $w={3} />
        {taskApps.map(([icon, open, active], i) => (
          <TaskSlot key={i} $w={62} $open={open} $active={active}>{icon}</TaskSlot>
        ))}
        <TrayArea>
          <TaskSlot $w={30}><People /></TaskSlot>
          <TaskSlot $w={30} $ml={14}>
            <Ico s={18} h={12}><path d="M1.5 10L9 3l7.5 7" stroke="#fff" /></Ico>
          </TaskSlot>
          <TaskSlot $w={30}><Cloud /></TaskSlot>
          <TaskSlot $w={30}><Battery /></TaskSlot>
          <TaskSlot $w={30}><Dropbox /></TaskSlot>
          <TaskSlot $w={30}><Volume /></TaskSlot>
          <TaskSlot $w={40}><Keyboard /></TaskSlot>
          <TrayText $w={40} $ml={2}>ESP</TrayText>
          <TrayText $w={80} $ml={9.6}>
            <span>0:03</span>
            <span>17/09/2019</span>
          </TrayText>
          <TaskSlot $w={60} $ml={1.4}>
            <NotifIcon />
            <Badge>2</Badge>
          </TaskSlot>
        </TrayArea>
      </Taskbar>
    </Page>
  );
}
